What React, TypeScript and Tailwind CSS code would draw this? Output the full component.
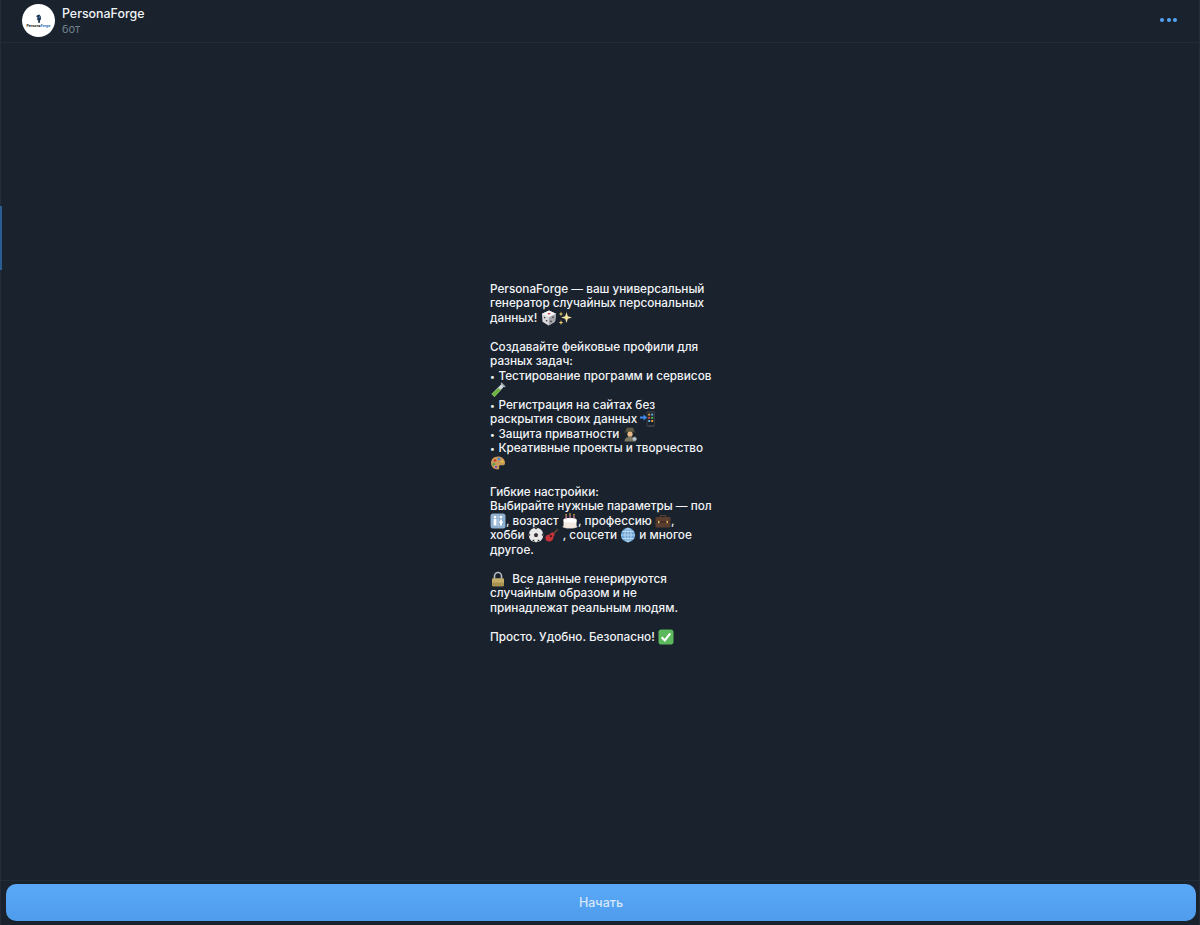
import React from "react";

const E = ({ children, w = 16 }: { children: React.ReactNode; w?: number }) => (
  <svg viewBox="0 0 16 16" width={w} height={16} className="inline-block align-baseline -my-[4px]">
    {children}
  </svg>
);

const Dice = () => (
  <E>
    <path d="M8 .5 15 3.8 14 11.8 7.6 15.5 1.5 11.8 1 3.8Z" fill="#d9d9dc" />
    <path d="M8 .5 15 3.8 8 7.2 1 3.8Z" fill="#f4f4f6" />
    <path d="M8 7.2 15 3.8 14 11.8 7.6 15.5Z" fill="#a4a4aa" />
    <ellipse cx="8" cy="3.8" rx="1.4" ry=".8" fill="#c83a3a" />
    <circle cx="3.6" cy="7.6" r=".8" fill="#333" /><circle cx="5.6" cy="10.8" r=".8" fill="#333" />
    <circle cx="12" cy="7.2" r=".8" fill="#333" /><circle cx="10" cy="11.4" r=".8" fill="#333" />
  </E>
);
const Sparkles = () => (
  <E>
    <path d="M9.5 2 10.8 6.2 15 7.5 10.8 8.8 9.5 13 8.2 8.8 4 7.5 8.2 6.2Z" fill="#f6e7a0" />
    <path d="M4 1.5 4.6 3.4 6.5 4 4.6 4.6 4 6.5 3.4 4.6 1.5 4 3.4 3.4Z" fill="#f5d36a" />
    <path d="M4 10 4.6 12 6.5 12.6 4.6 13.2 4 15 3.4 13.2 1.5 12.6 3.4 12Z" fill="#f5d36a" />
  </E>
);
const Tube = () => (
  <E>
    <path d="M12 1.5 14.5 4 4.5 15 1.5 12Z" fill="#cfd8dc" />
    <path d="M8.4 6 11 8 4.5 15 1.5 12Z" fill="#6cb33f" />
    <path d="M11 .8 15.2 5" stroke="#9aa5aa" strokeWidth="1.4" />
  </E>
);
const Phone = () => (
  <E>
    <rect x="6.5" y="0" width="8.5" height="16" rx="1.4" fill="#3a3c42" />
    <rect x="7.5" y="1.5" width="6.5" height="12.5" fill="#1c2028" />
    <rect x="8.2" y="2.6" width="2" height="2" fill="#e0a03a" /><rect x="11.2" y="2.6" width="2" height="2" fill="#5bb0e8" />
    <rect x="8.2" y="5.8" width="2" height="2" fill="#d9534f" /><rect x="11.2" y="5.8" width="2" height="2" fill="#5cb85c" />
    <rect x="8.2" y="9" width="2" height="2" fill="#5bb0e8" /><rect x="11.2" y="9" width="2" height="2" fill="#e0a03a" />
    <path d="M0 5.5H3.5V3.5L7 6.5 3.5 9.5V7.5H0Z" fill="#3b8bf0" />
  </E>
);
const Detective = () => (
  <E>
    <path d="M3.5 6C4 1.5 5.5 1 8 2 10.5 1 12 1.5 12.5 6Z" fill="#5a5844" />
    <rect x="2" y="5.4" width="12" height="1.2" rx=".6" fill="#46442f" />
    <circle cx="8" cy="8.2" r="2.6" fill="#e7b98a" />
    <path d="M2.5 15.5C3 11.5 5 11 8 11S13 11.5 13.5 15.5Z" fill="#7a7862" />
    <circle cx="12.5" cy="13" r="2" fill="#b8c6d4" stroke="#8a8a80" strokeWidth=".7" />
  </E>
);
const Palette = () => (
  <E>
    <path d="M8 1.5C3.8 1.5 1 4.3 1 8s3 6.5 6.6 6.5c1.8 0 2-1.2 1.5-2.2-.5-1.2.2-2.1 1.5-2.1h2.4c1.3 0 2-.9 2-2.3C15 4 12 1.5 8 1.5Z" fill="#c79a5b" />
    <circle cx="5" cy="5.5" r="1.3" fill="#d8392f" /><circle cx="9" cy="4" r="1.3" fill="#3b7dd8" />
    <circle cx="12.3" cy="6.6" r="1.2" fill="#f0c63a" /><circle cx="3.8" cy="9.3" r="1.3" fill="#4aa64a" />
    <circle cx="6" cy="12" r="1.2" fill="#8a4fbf" />
  </E>
);
const Restroom = () => (
  <E>
    <rect x="0.5" y="0.5" width="15" height="15" rx="2.5" fill="#8fb0d0" />
    <circle cx="5" cy="4" r="1.3" fill="#fff" /><rect x="3.6" y="5.8" width="2.8" height="6.7" rx=".8" fill="#fff" />
    <circle cx="11" cy="4" r="1.3" fill="#fff" /><path d="M11 5.6 13 10H12V12.5H10V10H9Z" fill="#fff" />
    <rect x="7.8" y="2.5" width=".5" height="11" fill="#e6eef5" />
  </E>
);
const Cake = () => (
  <E>
    <ellipse cx="8" cy="13.8" rx="7.5" ry="1.8" fill="#cdbfb6" />
    <path d="M1.5 7C1.5 5.6 4.5 5 8 5s6.5.6 6.5 2v6.2c0 1-2.8 1.8-6.5 1.8s-6.5-.8-6.5-1.8Z" fill="#f3e9e1" />
    <path d="M1.5 7C1.5 5.6 4.5 5 8 5s6.5.6 6.5 2v2c-.8 1-1.8.7-2.2 0-.8 1-2 1-2.6 0-.8 1-2 1-2.8 0-.7 1-1.7 1-2.4 0-.4.7-1.6 1-2.5 0Z" fill="#fff" />
    <rect x="3.6" y="2.4" width="1.1" height="3.6" fill="#e58fa2" /><rect x="7.5" y="1.8" width="1.1" height="3.6" fill="#e58fa2" /><rect x="11.4" y="2.4" width="1.1" height="3.6" fill="#e58fa2" />
    <circle cx="4.1" cy="1.7" r=".8" fill="#f5b942" /><circle cx="8" cy="1.1" r=".8" fill="#f5b942" /><circle cx="12" cy="1.7" r=".8" fill="#f5b942" />
  </E>
);
const Case = () => (
  <E>
    <path d="M5.5 4V2.5h5V4" fill="none" stroke="#5a4030" strokeWidth="1.2" />
    <rect x="0.5" y="4" width="15" height="10.5" rx="1.2" fill="#5a3d2f" />
    <rect x="0.5" y="8.5" width="15" height="1" fill="#33221a" />
    <rect x="3" y="7.8" width="1.5" height="2.4" fill="#d9b45b" /><rect x="11.5" y="7.8" width="1.5" height="2.4" fill="#d9b45b" />
  </E>
);
const Ball = () => (
  <E>
    <circle cx="8" cy="8" r="7.3" fill="#e9e9e9" />
    <path d="M8 5.8 10.2 7.4 9.3 10H6.7L5.8 7.4Z" fill="#333" />
    <path d="M6.2 1 9.8 1 8 2.4ZM14.9 6 15 9.6 13.6 8ZM1.1 6 2.4 8 1 9.6ZM4 13.6 6 12.6 6.8 15ZM12 13.6 9.2 15 10 12.6Z" fill="#333" />
  </E>
);
const Guitar = () => (
  <E>
    <path d="M9 7 14 2" stroke="#7a4a2a" strokeWidth="1.5" />
    <path d="M13 1.2 15 3.2 14 4 12 2Z" fill="#333" />
    <path d="M8 5.3C9.2 5 10.8 6.6 10.6 8 10.4 9 9.4 9.2 9.4 10.2 9.4 12 8 14.5 5 14.5 2.5 14.5 1.4 13.3 1.4 11 1.4 8.3 4 7.5 5.6 7.4 6.6 7.3 7 5.7 8 5.3Z" fill="#c8323a" />
    <circle cx="6.8" cy="9.2" r="1.1" fill="#3a1518" />
  </E>
);
const Globe = () => (
  <E>
    <circle cx="8" cy="8" r="7.2" fill="#6ea6d8" />
    <g fill="none" stroke="#c7def2" strokeWidth=".8">
      <ellipse cx="8" cy="8" rx="3.2" ry="7" /><path d="M8 1V15M1 8H15M2 4.5H14M2 11.5H14" />
    </g>
  </E>
);
const Lock = () => (
  <E>
    <path d="M4.5 8V5a3.5 3.5 0 0 1 7 0v3" fill="none" stroke="#b9bcc0" strokeWidth="1.6" />
    <rect x="2" y="7.2" width="12" height="8" rx="1.2" fill="#c4ad6a" />
    <rect x="2" y="11.5" width="12" height="3.7" rx="1.2" fill="#a8924f" />
  </E>
);
const Check = () => (
  <E>
    <rect x="0.5" y="0.5" width="15" height="15" rx="2.8" fill="#5cb85c" />
    <path d="M3.7 8.2 6.8 11.5 12.3 4.3" fill="none" stroke="#fff" strokeWidth="2.1" />
  </E>
);

const B = () => <span className="text-[9px] mr-[0.5px]">•</span>;

const lines: React.ReactNode[] = [
  "PersonaForge — ваш универсальный",
  "генератор случайных персональных",
  <>данных! <Dice /><Sparkles /></>,
  "",
  "Создавайте фейковые профили для",
  "разных задач:",
  <><B /> Тестирование программ и сервисов</>,
  <Tube />,
  <><B /> Регистрация на сайтах без</>,
  <>раскрытия своих данных <Phone /></>,
  <><B /> Защита приватности <Detective /></>,
  <><B /> Креативные проекты и творчество</>,
  <Palette />,
  "",
  "Гибкие настройки:",
  "Выбирайте нужные параметры — пол",
  <><Restroom />, возраст <Cake />, профессию <Case />,</>,
  <>хобби <Ball /><Guitar /> , соцсети <Globe /> и многое</>,
  "другое.",
  "",
  <><Lock />  Все данные генерируются</>,
  "случайным образом и не",
  "принадлежат реальным людям.",
  "",
  <>Просто. Удобно. Безопасно! <Check /></>,
];

export default function App() {
  return (
    <div className="h-[925px] w-[1200px] flex flex-col bg-[#19222d] border-x border-[#232c38] font-['Inter','Liberation_Sans',sans-serif] antialiased relative">
      <div className="absolute left-[-1px] top-[206px] h-[64px] w-[2px] bg-[#2b5d94]" />
      <header className="h-[43px] shrink-0 flex items-center pl-[21px] pr-[22px] border-b border-[#212c38]">
        <div className="w-[33px] h-[33px] rounded-full bg-white flex flex-col items-center justify-center shrink-0 mb-[1px]">
          <svg viewBox="0 0 12 12" width="9" height="9" className="mb-[1px]">
            <path d="M4 1.5 7 .8 9 3 9.5 6.5 8 8.5 8 11.5H5.5L5.5 8.5 3.8 7 5 5 3 3.5Z" fill="#24384f" />
            <circle cx="7.5" cy="4" r="1.3" fill="#3b74b5" />
          </svg>
          <div className="text-[3.5px] leading-[4px] font-bold text-[#222] whitespace-nowrap">
            Persona<span className="text-[#2f6fb5]">Forge</span>
          </div>
        </div>
        <div className="ml-[7px] flex-1">
          <div className="text-[12.4px] leading-[15px] font-[450] text-[#f0f3f6]">PersonaForge</div>
          <div className="text-[11px] leading-[14px] mt-[1px] text-[#73818f]">бот</div>
        </div>
        <div className="flex gap-[2.5px] mb-[2px]">
          <span className="w-[4px] h-[4px] rounded-full bg-[#55a3f5]" />
          <span className="w-[4px] h-[4px] rounded-full bg-[#55a3f5]" />
          <span className="w-[4px] h-[4px] rounded-full bg-[#55a3f5]" />
        </div>
      </header>
      <main className="flex-1 flex items-center justify-center">
        <div className="w-[220px] mt-[3px] text-[11.75px] leading-[14.5px] font-[450] text-[#f2f4f7] whitespace-pre">
          {lines.map((l, i) => (
            <div key={i} className="h-[14.5px]">{l === "" ? " " : l}</div>
          ))}
        </div>
      </main>
      <footer className="h-[45px] shrink-0 border-t border-[#212c38] pt-[3px] px-[5px]">
        <button className="w-[1190px] h-[37px] pt-[2px] rounded-[10px] bg-gradient-to-b from-[#5aa8f8] to-[#4f9cec] text-[12.5px] font-[450] text-[#d5e7fb]">
          Начать
        </button>
      </footer>
    </div>
  );
}
